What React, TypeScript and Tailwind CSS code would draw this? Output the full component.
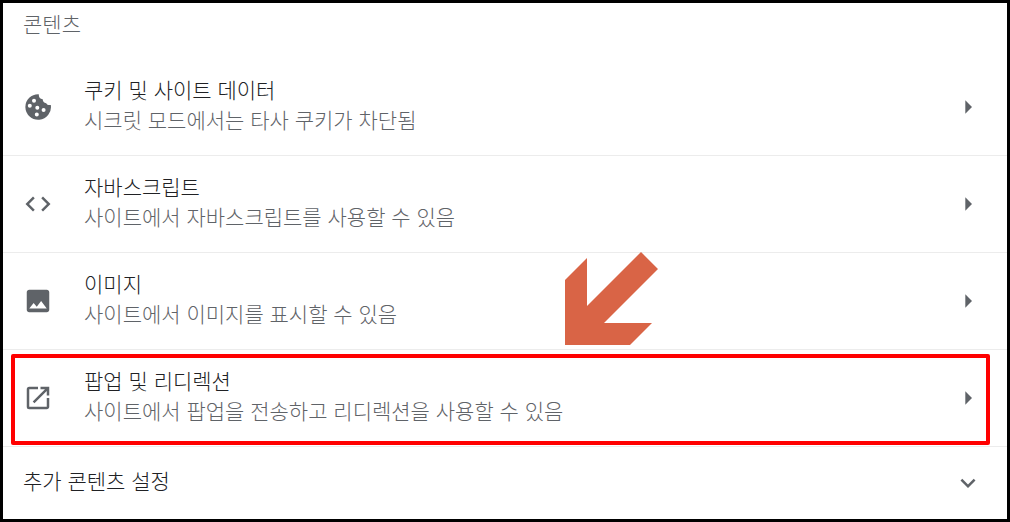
import type { ReactNode } from "react";
import { MdCode, MdExpandMore, MdImage, MdOpenInNew } from "react-icons/md";

type SettingRow = {
    id: string;
    icon: ReactNode;
    title: string;
    description: string;
    highlighted?: boolean;
};

// 구멍이 다섯 개인 쿠키 아이콘
function CookieIcon() {
    return (
        <svg
            viewBox="0 0 30 30"
            width="1em"
            height="1em"
            fill="currentColor"
            aria-hidden="true"
        >
            <path
                fillRule="evenodd"
                d="M15.8 2.2C15.6 5 17 7 19.7 7.3C19.8 9.7 21 11 23.2 11.2C24 12.9 25.8 13.3 27.8 12.9A12.8 12.8 0 1 1 15.8 2.2ZM11 6.7a2 2 0 1 0 0 4a2 2 0 1 0 0-4ZM6.8 11.7a2 2 0 1 0 0 4a2 2 0 1 0 0-4ZM14.3 13.7a2 2 0 1 0 0 4a2 2 0 1 0 0-4ZM20.6 15.9a2 2 0 1 0 0 4a2 2 0 1 0 0-4ZM13.8 20.4a2 2 0 1 0 0 4a2 2 0 1 0 0-4Z"
            />
        </svg>
    );
}

function ArrowRightIcon() {
    return (
        <svg
            className="size-[30px] text-[#5f6368]"
            viewBox="0 0 30 30"
            fill="currentColor"
            aria-hidden="true"
        >
            <path d="M12.3 8.3 19 15 12.3 21.7Z" />
        </svg>
    );
}

const ROWS: SettingRow[] = [
    {
        id: "cookies",
        icon: <CookieIcon />,
        title: "쿠키 및 사이트 데이터",
        description: "시크릿 모드에서는 타사 쿠키가 차단됨",
    },
    {
        id: "javascript",
        icon: <MdCode />,
        title: "자바스크립트",
        description: "사이트에서 자바스크립트를 사용할 수 있음",
    },
    {
        id: "images",
        icon: <MdImage />,
        title: "이미지",
        description: "사이트에서 이미지를 표시할 수 있음",
    },
    {
        id: "popups",
        icon: <MdOpenInNew />,
        title: "팝업 및 리디렉션",
        description: "사이트에서 팝업을 전송하고 리디렉션을 사용할 수 있음",
        highlighted: true,
    },
];

// 강조할 항목을 가리키는 화살표
function PointerArrow() {
    return (
        <svg
            className="pointer-events-none absolute bottom-full left-[56%] mb-[5px] h-[93px] w-[93px]"
            viewBox="0 0 93 93"
            fill="#d96446"
            aria-hidden="true"
        >
            <path d="M76 0 93 17 39 71H87L65 93H0V28L22 6V54Z" />
        </svg>
    );
}

function SettingLink({ row }: { row: SettingRow }) {
    return (
        <li className="relative border-b border-[#ececec]">
            <button
                type="button"
                className="flex h-24 w-full items-center pr-6 pl-5 text-left"
            >
                <span className="mr-[31px] text-[30px] text-[#5f6368]">
                    {row.icon}
                </span>
                <span className="flex-1 pb-0.5">
                    <span className="block leading-[30px] text-[#202124]">
                        {row.title}
                    </span>
                    <span className="block leading-[30px] text-[#5f6368]">
                        {row.description}
                    </span>
                </span>
                <ArrowRightIcon />
            </button>
            {row.highlighted && (
                <>
                    <span className="pointer-events-none absolute top-1 right-[17px] bottom-px left-2 rounded-xs border-4 border-[#ff0000]" />
                    <PointerArrow />
                </>
            )}
        </li>
    );
}

export default function App() {
    return (
        <main className="min-h-screen border-3 border-black bg-white font-['Liberation_Sans','Noto_Sans_CJK_KR',sans-serif] text-[21px] font-light">
            <h2 className="px-5 pt-[7px] pb-[19px] leading-[30px] font-light text-[#5f6368]">
                콘텐츠
            </h2>
            <ul>
                {ROWS.map((row) => (
                    <SettingLink key={row.id} row={row} />
                ))}
            </ul>
            <button
                type="button"
                className="flex h-[72px] w-full items-center justify-between pr-6 pl-5 text-left text-[#202124]"
            >
                <span className="pb-0.5">추가 콘텐츠 설정</span>
                <MdExpandMore className="text-[30px] text-[#5f6368]" />
            </button>
        </main>
    );
}
